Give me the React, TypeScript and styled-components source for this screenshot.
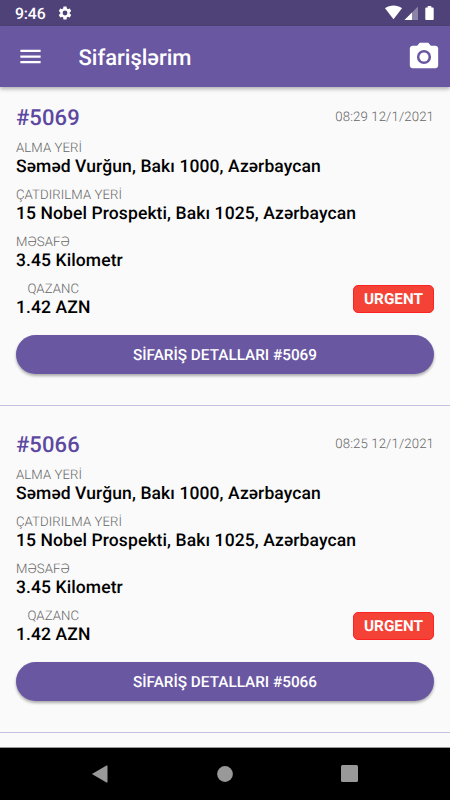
import React from "react";
import styled, { createGlobalStyle } from "styled-components";

const GlobalStyle = createGlobalStyle`
  *, *::before, *::after { box-sizing: border-box; }
  body {
    margin: 0;
    background: #fafafa;
    font-family: Roboto, "Liberation Sans", sans-serif;
    text-rendering: geometricPrecision;
  }
`;

const Screen = styled.div`
  width: 450px;
  height: 800px;
  display: flex;
  flex-direction: column;
  overflow: hidden;
  background: #fafafa;
`;

const StatusBar = styled.div`
  flex: none;
  height: 26px;
  display: flex;
  align-items: center;
  justify-content: space-between;
  padding: 0 15px;
  background: #4f4278;
  color: #fff;
`;

const StatusGroup = styled.div`
  display: flex;
  align-items: center;
`;

const Clock = styled.span`
  width: 42px;
  padding-top: 2px;
  font-size: 15.8px;
  line-height: 20px;
  font-weight: 500;
  letter-spacing: -0.15px;
`;

const AppBar = styled.header`
  flex: none;
  height: 61px;
  display: flex;
  align-items: center;
  padding: 0 9px 0 17px;
  background: #6a57a2;
  color: #fff;
  box-shadow: 0 2px 4px rgba(0, 0, 0, 0.3);
  z-index: 1;
`;

const Title = styled.h1`
  flex: 1;
  margin: 0 0 0 34.5px;
  padding-top: 4px;
  font-size: 22px;
  line-height: 30px;
  font-weight: 500;
`;

const List = styled.main`
  flex: 1;
  min-height: 0;
  overflow: hidden;
`;

const OrderCard = styled.article`
  height: 319px;
  margin-bottom: 8px;
  padding: 18px 16px 0;
  border-bottom: 1px solid #c5c0df;
`;

const CardHead = styled.div`
  height: 35px;
  display: flex;
  justify-content: space-between;
`;

const OrderNumber = styled.h2`
  margin: 0;
  font-size: 22px;
  line-height: 28px;
  font-weight: 500;
  letter-spacing: 0.1px;
  color: #5d48a0;
`;

const Time = styled.time`
  font-size: 13.2px;
  line-height: 25px;
  font-weight: 300;
  letter-spacing: 0.12px;
  color: #666;
`;

const Field = styled.div<{ $centered?: boolean }>`
  height: 47px;
  text-align: ${(p) => (p.$centered ? "center" : "left")};
`;

const Label = styled.div`
  font-size: 13.2px;
  line-height: 17px;
  font-weight: 300;
  letter-spacing: 0.06px;
  color: #666;
`;

const Value = styled.div`
  font-size: 17.5px;
  line-height: 20px;
  font-weight: 500;
  letter-spacing: 0.1px;
  color: #000;
  white-space: nowrap;
`;

const EarningsRow = styled.div`
  display: flex;
  justify-content: space-between;
  align-items: flex-start;
`;

const UrgentBadge = styled.span`
  width: 81px;
  height: 28px;
  margin-top: 4px;
  display: flex;
  align-items: center;
  justify-content: center;
  border: 1px solid #f22;
  border-radius: 5px;
  background: #f44336;
  color: #fff;
  font-size: 15.3px;
  font-weight: 700;
`;

const DetailsButton = styled.button`
  display: block;
  width: 100%;
  height: 39px;
  margin-top: 7px;
  padding: 1px 0 0;
  border: 0;
  border-radius: 20px;
  background: #6a57a2;
  color: #fff;
  font-family: inherit;
  font-size: 15.3px;
  font-weight: 500;
  text-rendering: inherit;
  box-shadow: 0 2px 3px rgba(0, 0, 0, 0.32);
`;

const NavBar = styled.nav`
  flex: none;
  height: 53px;
  display: grid;
  grid-template-columns: repeat(3, 125px);
  justify-content: center;
  align-items: center;
  justify-items: center;
  padding: 0 1px 1px 0;
  border-top: 1px solid #999;
  background: #000;
`;

const Glyph = styled.svg`
  display: block;
  flex: none;
`;

const GearIcon = () => (
  <Glyph width="16" height="16" viewBox="0 0 24 24" fill="#fff">
    <path d="M19.14 12.94c.04-.3.06-.61.06-.94 0-.32-.02-.64-.07-.94l2.03-1.58a.49.49 0 0 0 .12-.61l-1.92-3.32a.49.49 0 0 0-.59-.22l-2.39.96c-.5-.38-1.03-.7-1.62-.94l-.36-2.54a.48.48 0 0 0-.48-.41h-3.84c-.24 0-.43.17-.47.41l-.36 2.54c-.59.24-1.13.57-1.62.94l-2.39-.96a.48.48 0 0 0-.59.22L2.74 8.87c-.12.21-.08.47.12.61l2.03 1.58c-.05.3-.09.63-.09.94s.02.64.07.94l-2.03 1.58a.49.49 0 0 0-.12.61l1.92 3.32c.12.22.37.29.59.22l2.39-.96c.5.38 1.03.7 1.62.94l.36 2.54c.05.24.24.41.48.41h3.84c.24 0 .44-.17.47-.41l.36-2.54c.59-.24 1.13-.56 1.62-.94l2.39.96c.22.08.47 0 .59-.22l1.92-3.32a.47.47 0 0 0-.12-.61zM12 15.6A3.6 3.6 0 1 1 12 8.4a3.6 3.6 0 0 1 0 7.2z" />
  </Glyph>
);

const SignalIcons = () => (
  <Glyph width="50" height="16" viewBox="0 0 50 16" fill="#fff">
    <path d="M0 3.2C5 -.3 12 -.3 17 3.2L8.5 14.2Z" />
    <path d="M33 1.5V15H19.5Z" opacity=".35" />
    <path d="M27 7.5V15H19.5Z" />
    <path d="M42.7 1h3.6v1.4h1.2c.7 0 1.2.5 1.2 1.2v10.3c0 .7-.5 1.1-1.2 1.1h-6c-.7 0-1.2-.4-1.2-1.1V3.6c0-.7.5-1.2 1.2-1.2h1.2z" />
  </Glyph>
);

const MenuIcon = () => (
  <Glyph width="27" height="27" viewBox="0 0 24 24" fill="#fff">
    <path d="M3 18h18v-2H3v2zm0-5h18v-2H3v2zm0-7v2h18V6H3z" />
  </Glyph>
);

const CameraIcon = () => (
  <Glyph width="34" height="34" viewBox="0 0 24 24" fill="#fff">
    <path d="M9 2 7.17 4H4c-1.1 0-2 .9-2 2v12c0 1.1.9 2 2 2h16c1.1 0 2-.9 2-2V6c0-1.1-.9-2-2-2h-3.17L15 2H9zm3 15a5 5 0 1 1 0-10 5 5 0 0 1 0 10z" />
    <circle cx="12" cy="12" r="3.2" />
  </Glyph>
);

const orders = [
  { id: "#5069", time: "08:29 12/1/2021" },
  { id: "#5066", time: "08:25 12/1/2021" },
];

const Order = ({ id, time }: { id: string; time: string }) => (
  <OrderCard>
    <CardHead>
      <OrderNumber>{id}</OrderNumber>
      <Time>{time}</Time>
    </CardHead>
    <Field>
      <Label>ALMA YERİ</Label>
      <Value>Səməd Vurğun, Bakı 1000, Azərbaycan</Value>
    </Field>
    <Field>
      <Label>ÇATDIRILMA YERİ</Label>
      <Value>15 Nobel Prospekti, Bakı 1025, Azərbaycan</Value>
    </Field>
    <Field>
      <Label>MƏSAFƏ</Label>
      <Value>3.45 Kilometr</Value>
    </Field>
    <EarningsRow>
      <Field $centered>
        <Label>QAZANC</Label>
        <Value>1.42 AZN</Value>
      </Field>
      <UrgentBadge>URGENT</UrgentBadge>
    </EarningsRow>
    <DetailsButton>SİFARİŞ DETALLARI {id}</DetailsButton>
  </OrderCard>
);

export default function App() {
  return (
    <Screen>
      <GlobalStyle />
      <StatusBar>
        <StatusGroup>
          <Clock>9:46</Clock>
          <GearIcon />
        </StatusGroup>
        <SignalIcons />
      </StatusBar>
      <AppBar>
        <MenuIcon />
        <Title>Sifarişlərim</Title>
        <CameraIcon />
      </AppBar>
      <List>
        {orders.map((o) => (
          <Order key={o.id} {...o} />
        ))}
      </List>
      <NavBar>
        <Glyph width="18" height="18" viewBox="0 0 18 18" fill="#999">
          <path d="M.9 9 15.5.6q1-.5 1 .5v15.8q0 1-1 .5Z" />
        </Glyph>
        <Glyph width="16" height="16" viewBox="0 0 16 16" fill="#999">
          <circle cx="8" cy="8" r="7.9" />
        </Glyph>
        <Glyph width="17" height="17" viewBox="0 0 17 17" fill="#999">
          <rect width="17" height="17" rx="1.5" />
        </Glyph>
      </NavBar>
    </Screen>
  );
}
